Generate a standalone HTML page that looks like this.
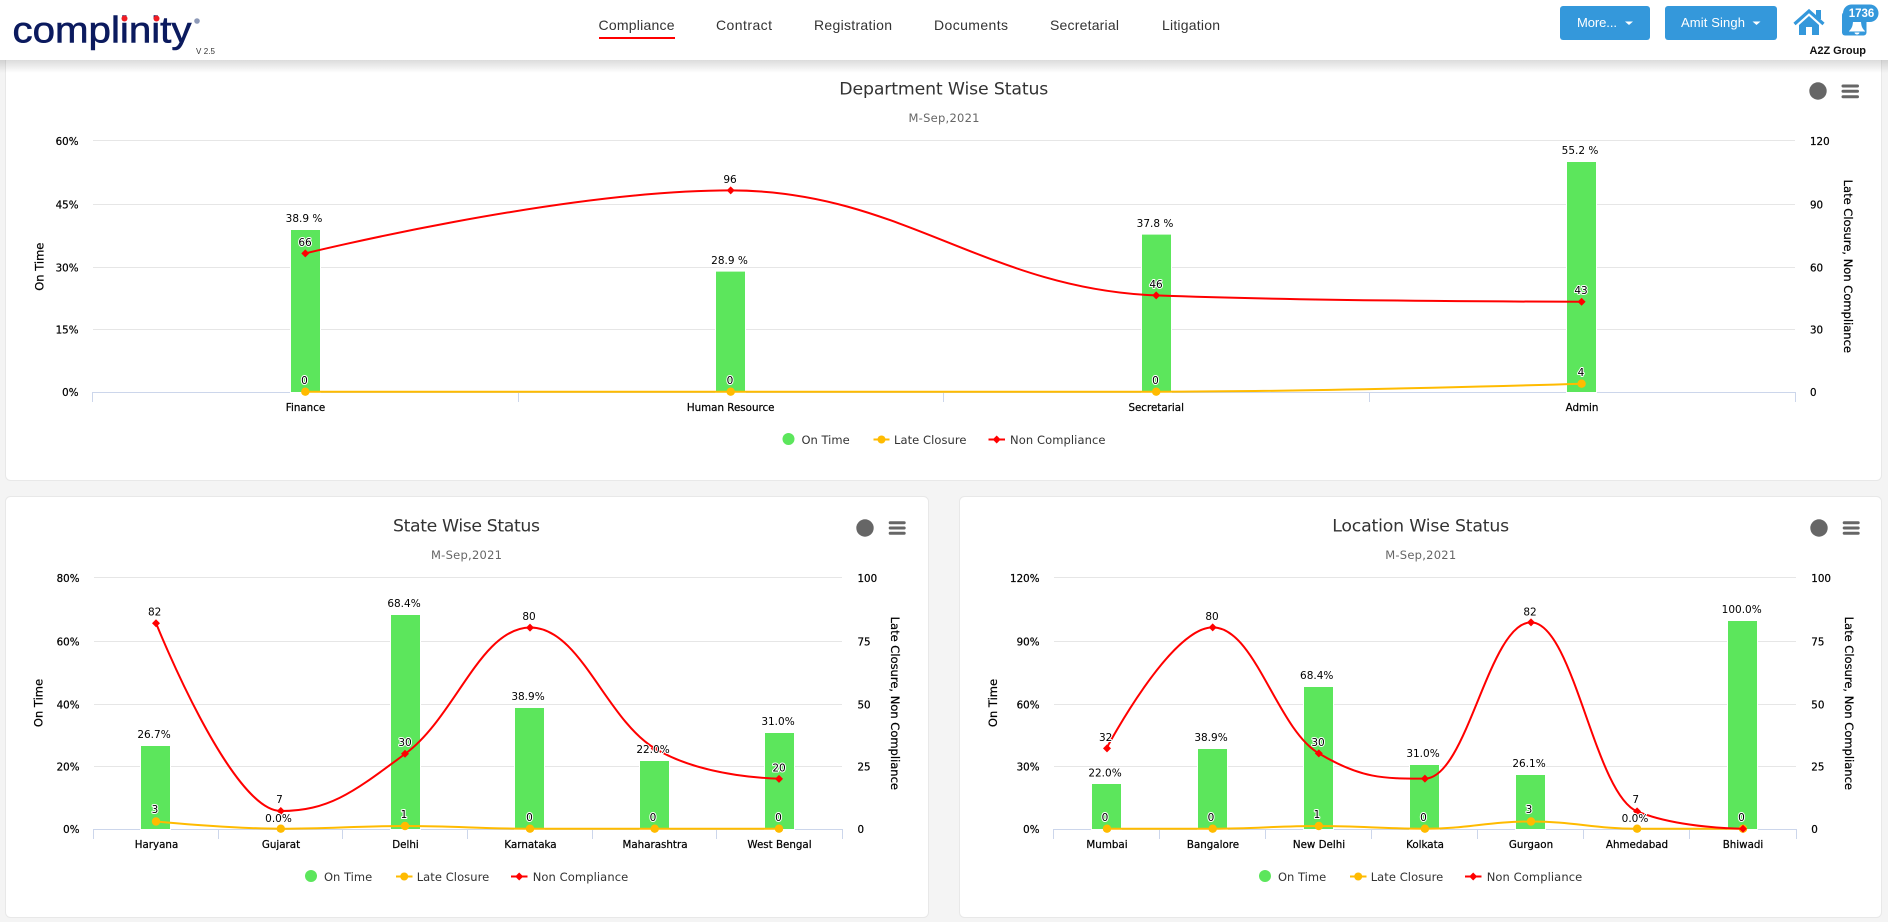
<!DOCTYPE html>
<html><head><meta charset="utf-8"><title>Complinity</title>
<style>
html,body{margin:0;padding:0;background:#f4f4f4;width:1888px;height:922px;overflow:hidden}
svg{display:block;position:absolute;left:0;top:0}
text{font-family:"DejaVu Sans","Liberation Sans",sans-serif}
.g{stroke:#e6e6e6;stroke-width:1;fill:none;shape-rendering:crispEdges}
.a{stroke:#ccd6eb;stroke-width:1;fill:none;shape-rendering:crispEdges}
.b{fill:#5ce65c;stroke:#fff;stroke-width:2;paint-order:stroke}
.r{fill:none;stroke:#ff0000;stroke-width:2}
.y{fill:none;stroke:#ffbb00;stroke-width:2}
.ym{fill:#ffbb00}
.rm{fill:#ff0000}
.t{font-size:10.3px;fill:#000;stroke:#000;stroke-width:.22px}
.tr{font-size:10.3px;fill:#000;text-anchor:end;stroke:#000;stroke-width:.22px}
.c{font-size:10.3px;fill:#000;text-anchor:middle;stroke:#000;stroke-width:.22px}
.at{font-size:11.5px;fill:#000;text-anchor:middle;stroke:#000;stroke-width:.22px}
.d{font-size:10.5px;fill:#000;text-anchor:middle;stroke:#fff;stroke-width:2px;stroke-linejoin:round;paint-order:stroke}
.ttl{font-size:17.3px;fill:#333;text-anchor:middle}
.sub{font-size:11.5px;fill:#666;text-anchor:middle}
.l{font-size:11.5px;fill:#333}
.nav{font-family:"Liberation Sans",sans-serif;font-size:14px;fill:#333}
.btn{font-family:"Liberation Sans",sans-serif;font-size:13px;fill:#fff}
.hb{stroke:#666;stroke-width:3;stroke-linecap:round;fill:none}
</style></head><body>
<svg width="1888" height="922" viewBox="0 0 1888 922" xmlns="http://www.w3.org/2000/svg">
<defs><linearGradient id="sh" x1="0" y1="0" x2="0" y2="1"><stop offset="0" stop-color="#000" stop-opacity=".14"/><stop offset="1" stop-color="#000" stop-opacity="0"/></linearGradient></defs>
<!-- cards -->
<rect x="5.5" y="30.5" width="1876" height="450" rx="5" fill="#fff" stroke="#e8e8e8"/>
<rect x="5.5" y="496.5" width="923" height="421" rx="5" fill="#fff" stroke="#e8e8e8"/>
<rect x="959.5" y="496.5" width="922" height="421" rx="5" fill="#fff" stroke="#e8e8e8"/>

<!-- CHART 1 -->
<g>
<path class="g" d="M93 140.5H1795M93 204.5H1795M93 267.5H1795M93 329.5H1795"/>
<path class="a" d="M92.5 392.5H1795.5M92.5 392V402M518.5 392V402M943.5 392V402M1369.5 392V402M1795.5 392V402"/>
<rect class="b" x="291" y="230" width="29" height="162"/>
<rect class="b" x="716" y="271.6" width="29" height="120.4"/>
<rect class="b" x="1142" y="234.6" width="29" height="157.4"/>
<rect class="b" x="1567" y="162" width="29" height="230"/>
<path class="y" d="M305.3 391.7L1156.2 391.7C1326.4 391.7 1581.6 383.7 1581.6 383.7"/>
<circle class="ym" cx="305.3" cy="391.7" r="4.2"/><circle class="ym" cx="730.7" cy="391.7" r="4.2"/><circle class="ym" cx="1156.2" cy="391.7" r="4.2"/><circle class="ym" cx="1581.6" cy="383.7" r="4.2"/>
<path class="r" d="M305.3 253.4C305.3 253.4 560.5 190.4 730.7 190.4C900.9 190.4 986 289.1 1156.2 295.4C1326.4 301.7 1581.6 301.7 1581.6 301.7"/>
<path class="rm" d="M305.3 249.4l4 4-4 4-4-4zM730.7 186.4l4 4-4 4-4-4zM1156.2 291.4l4 4-4 4-4-4zM1581.6 297.7l4 4-4 4-4-4z"/>
<text class="tr" x="78.5" y="145">60%</text><text class="tr" x="78.5" y="208.5">45%</text><text class="tr" x="78.5" y="271.5">30%</text><text class="tr" x="78.5" y="333.5">15%</text><text class="tr" x="78.5" y="396">0%</text>
<text class="t" x="1810" y="145">120</text><text class="t" x="1810" y="208.5">90</text><text class="t" x="1810" y="271.5">60</text><text class="t" x="1810" y="333.5">30</text><text class="t" x="1810" y="396">0</text>
<text class="at" transform="translate(43.5 266.7) rotate(-90)">On Time</text>
<text class="at" transform="translate(1844 266.3) rotate(90)">Late Closure, Non Compliance</text>
<text class="c" x="305.5" y="411">Finance</text><text class="c" x="730.7" y="411">Human Resource</text><text class="c" x="1156.2" y="411">Secretarial</text><text class="c" x="1582" y="411">Admin</text>
<text class="d" x="304" y="222">38.9 %</text><text class="d" x="729.5" y="264">28.9 %</text><text class="d" x="1155" y="227">37.8 %</text><text class="d" x="1580" y="154">55.2 %</text>
<text class="d" x="305" y="246">66</text><text class="d" x="730" y="183">96</text><text class="d" x="1156" y="288">46</text><text class="d" x="1581" y="294">43</text>
<text class="d" x="304.5" y="384">0</text><text class="d" x="730" y="384">0</text><text class="d" x="1155.5" y="384">0</text><text class="d" x="1581" y="376">4</text>
<text class="ttl" x="943.8" y="94.7" textLength="209">Department Wise Status</text>
<text class="sub" x="944" y="122" textLength="71">M-Sep,2021</text>
<circle cx="788.5" cy="439" r="6" fill="#5ce65c"/><text class="l" x="801.5" y="444">On Time</text>
<path class="y" d="M873.5 439.5H889.5"/><circle class="ym" cx="881.5" cy="439.5" r="4"/><text class="l" x="894" y="444" textLength="72.5">Late Closure</text>
<path class="r" d="M988.5 439.5H1005"/><path class="rm" d="M996.7 435.5l4 4-4 4-4-4z"/><text class="l" x="1010" y="444" textLength="95.5">Non Compliance</text>
<circle cx="1818" cy="91" r="8.7" fill="#666"/><path class="hb" d="M1843 86H1857.500M1843 91.300H1857.500M1843 96.700H1857.500"/>
</g>

<!-- CHART 2 -->
<g>
<path class="g" d="M94 577.5H842M94 641.5H842M94 704.5H842M94 766.5H842"/>
<path class="a" d="M93.5 829.5H842.5M93.5 829V839M218.5 829V839M342.5 829V839M467.5 829V839M592.5 829V839M716.5 829V839M842.5 829V839"/>
<rect class="b" x="141" y="746" width="29" height="83"/>
<rect class="b" x="391" y="615" width="29" height="214"/>
<rect class="b" x="515" y="708" width="29" height="121"/>
<rect class="b" x="640" y="761" width="29" height="68"/>
<rect class="b" x="765" y="733" width="29" height="96"/>
<path class="y" d="M156 821.5C156 821.5 230.9 828.700 280.8 828.700C330.700 828.700 355.700 826 405.6 826C455.500 826 480.500 828.700 530.4 828.700L779.6 828.700"/>
<circle class="ym" cx="156" cy="821.5" r="4.2"/><circle class="ym" cx="280.8" cy="828.7" r="4.2"/><circle class="ym" cx="405" cy="826" r="4.2"/><circle class="ym" cx="530" cy="828.7" r="4.2"/><circle class="ym" cx="654.7" cy="828.7" r="4.2"/><circle class="ym" cx="779" cy="828.7" r="4.2"/>
<path class="r" d="M156 623C156 623 230.900 811 280.800 811C330.700 811 355.700 790.200 405.600 753.500C455.500 716.800 480.500 627.500 530.400 627.500C580.300 627.500 605.100 718.400 655 748.500C704.900 778.600 779.600 778.600 779.600 778.600"/>
<path class="rm" d="M156 619.3l4 4-4 4-4-4zM280.8 807l4 4-4 4-4-4zM405 749.7l4 4-4 4-4-4zM530 623.6l4 4-4 4-4-4zM654.7 744.5l4 4-4 4-4-4zM779 774.9l4 4-4 4-4-4z"/>
<text class="tr" x="79.5" y="582">80%</text><text class="tr" x="79.5" y="645.5">60%</text><text class="tr" x="79.5" y="708.5">40%</text><text class="tr" x="79.5" y="770.5">20%</text><text class="tr" x="79.5" y="833">0%</text>
<text class="t" x="857.5" y="582">100</text><text class="t" x="857.5" y="645.5">75</text><text class="t" x="857.5" y="708.5">50</text><text class="t" x="857.5" y="770.5">25</text><text class="t" x="857.5" y="833">0</text>
<text class="at" transform="translate(42.5 703) rotate(-90)">On Time</text>
<text class="at" transform="translate(891 703.3) rotate(90)">Late Closure, Non Compliance</text>
<text class="c" x="156.5" y="848">Haryana</text><text class="c" x="281" y="848">Gujarat</text><text class="c" x="405.5" y="848">Delhi</text><text class="c" x="530.5" y="848">Karnataka</text><text class="c" x="655" y="848">Maharashtra</text><text class="c" x="779.5" y="848">West Bengal</text>
<text class="d" x="154.7" y="615.5">82</text><text class="d" x="154" y="738">26.7%</text><text class="d" x="155" y="813">3</text>
<text class="d" x="279.5" y="803">7</text><text class="d" x="278.5" y="822">0.0%</text>
<text class="d" x="404" y="607">68.4%</text><text class="d" x="405" y="746">30</text><text class="d" x="404" y="818">1</text>
<text class="d" x="529" y="620">80</text><text class="d" x="528" y="700">38.9%</text><text class="d" x="529.5" y="821">0</text>
<text class="d" x="653" y="753">22.0%</text><text class="d" x="653" y="821">0</text>
<text class="d" x="778" y="725">31.0%</text><text class="d" x="779" y="771.7">20</text><text class="d" x="778.5" y="821">0</text>
<text class="ttl" x="466.5" y="531.7" textLength="147">State Wise Status</text>
<text class="sub" x="466.5" y="559" textLength="71">M-Sep,2021</text>
<circle cx="311" cy="876" r="6" fill="#5ce65c"/><text class="l" x="324" y="881">On Time</text>
<path class="y" d="M396 876.5H412.5"/><circle class="ym" cx="404.2" cy="876.5" r="4"/><text class="l" x="416.7" y="881" textLength="72.5">Late Closure</text>
<path class="r" d="M511 876.5H527.5"/><path class="rm" d="M519.2 872.5l4 4-4 4-4-4z"/><text class="l" x="532.7" y="881" textLength="95.5">Non Compliance</text>
<circle cx="865" cy="528" r="8.7" fill="#666"/><path class="hb" d="M890.200 522.700H904.200M890.200 528H904.200M890.200 533.300H904.200"/>
</g>

<!-- CHART 3 -->
<g>
<path class="g" d="M1054 577.5H1796M1054 641.5H1796M1054 704.5H1796M1054 766.5H1796"/>
<path class="a" d="M1053.5 829.5H1796.5M1053.5 829V839M1159.5 829V839M1265.5 829V839M1371.5 829V839M1477.5 829V839M1583.5 829V839M1689.5 829V839M1796.5 829V839"/>
<rect class="b" x="1092" y="784" width="29" height="45"/>
<rect class="b" x="1198" y="749" width="29" height="80"/>
<rect class="b" x="1304" y="687" width="29" height="142"/>
<rect class="b" x="1410" y="765" width="29" height="64"/>
<rect class="b" x="1516" y="775" width="29" height="54"/>
<rect class="b" x="1728" y="621" width="29" height="208"/>
<path class="y" d="M1106.5 828.700L1212.700 828.700C1255.100 828.700 1276.400 826 1318.800 826C1361.200 826 1382.500 828.700 1424.900 828.700C1467.300 828.700 1488.600 821.500 1531 821.500C1573.400 821.500 1594.700 828.700 1637.100 828.700L1743.200 828.700"/>
<circle class="ym" cx="1107" cy="828.7" r="4.2"/><circle class="ym" cx="1212.7" cy="828.7" r="4.2"/><circle class="ym" cx="1318.8" cy="826" r="4.2"/><circle class="ym" cx="1424.9" cy="828.7" r="4.2"/><circle class="ym" cx="1531" cy="821.5" r="4.2"/><circle class="ym" cx="1637.1" cy="828.7" r="4.2"/><circle class="ym" cx="1743" cy="828.7" r="4.2"/>
<path class="r" d="M1106.500 748.400C1106.500 748.400 1170.300 627.400 1212.700 627.400C1255.100 627.400 1276.400 728.200 1318.800 753.400C1361.200 778.600 1382.500 778.600 1424.900 778.600C1467.300 778.600 1488.600 622.400 1531 622.400C1573.400 622.400 1594.700 794.100 1637.100 811.400C1679.500 828.700 1743.200 828.700 1743.200 828.700"/>
<path class="rm" d="M1107 744.4l4 4-4 4-4-4zM1212.7 623.4l4 4-4 4-4-4zM1318.8 749.4l4 4-4 4-4-4zM1424.9 774.6l4 4-4 4-4-4zM1531 618.4l4 4-4 4-4-4zM1637.1 807.4l4 4-4 4-4-4zM1743 824.7l4 4-4 4-4-4z"/>
<text class="tr" x="1039.5" y="582">120%</text><text class="tr" x="1039.5" y="645.5">90%</text><text class="tr" x="1039.5" y="708.5">60%</text><text class="tr" x="1039.5" y="770.5">30%</text><text class="tr" x="1039.5" y="833">0%</text>
<text class="t" x="1811.3" y="582">100</text><text class="t" x="1811.3" y="645.5">75</text><text class="t" x="1811.3" y="708.5">50</text><text class="t" x="1811.3" y="770.5">25</text><text class="t" x="1811.3" y="833">0</text>
<text class="at" transform="translate(997 703) rotate(-90)">On Time</text>
<text class="at" transform="translate(1845 703.3) rotate(90)">Late Closure, Non Compliance</text>
<text class="c" x="1107" y="848">Mumbai</text><text class="c" x="1213" y="848">Bangalore</text><text class="c" x="1319" y="848">New Delhi</text><text class="c" x="1425" y="848">Kolkata</text><text class="c" x="1531" y="848">Gurgaon</text><text class="c" x="1637" y="848">Ahmedabad</text><text class="c" x="1743" y="848">Bhiwadi</text>
<text class="d" x="1105.7" y="741">32</text><text class="d" x="1105" y="776.7">22.0%</text><text class="d" x="1105" y="821">0</text>
<text class="d" x="1212" y="620">80</text><text class="d" x="1211" y="741">38.9%</text><text class="d" x="1211" y="821">0</text>
<text class="d" x="1316.7" y="679">68.4%</text><text class="d" x="1318" y="746">30</text><text class="d" x="1317" y="818">1</text>
<text class="d" x="1423" y="757">31.0%</text><text class="d" x="1423.5" y="821">0</text>
<text class="d" x="1530" y="615.5">82</text><text class="d" x="1529" y="767">26.1%</text><text class="d" x="1529" y="813">3</text>
<text class="d" x="1635.7" y="803">7</text><text class="d" x="1635" y="822">0.0%</text>
<text class="d" x="1741.7" y="613">100.0%</text><text class="d" x="1741.5" y="821">0</text>
<text class="ttl" x="1420.7" y="531.7" textLength="177">Location Wise Status</text>
<text class="sub" x="1420.7" y="559" textLength="71">M-Sep,2021</text>
<circle cx="1265" cy="876" r="6" fill="#5ce65c"/><text class="l" x="1278" y="881">On Time</text>
<path class="y" d="M1350 876.5H1366.5"/><circle class="ym" cx="1358.2" cy="876.5" r="4"/><text class="l" x="1370.7" y="881" textLength="72.5">Late Closure</text>
<path class="r" d="M1465 876.5H1481.5"/><path class="rm" d="M1473.2 872.5l4 4-4 4-4-4z"/><text class="l" x="1486.7" y="881" textLength="95.5">Non Compliance</text>
<circle cx="1819" cy="528" r="8.7" fill="#666"/><path class="hb" d="M1844.200 522.700H1858.200M1844.200 528H1858.200M1844.200 533.300H1858.200"/>
</g>

<!-- HEADER -->
<rect x="0" y="60" width="1888" height="13" fill="url(#sh)"/>
<rect x="0" y="0" width="1888" height="60" fill="#fff"/>
<text x="12.5" y="42.5" textLength="179" lengthAdjust="spacingAndGlyphs" style="font-family:'Liberation Sans',sans-serif;font-size:37px;fill:#0b1a5e;stroke:#0b1a5e;stroke-width:.6">complinity</text>
<circle cx="124.500" cy="18.500" r="3" fill="#f01c24"/><circle cx="156.500" cy="18.500" r="3" fill="#f01c24"/>
<circle cx="197" cy="21" r="2.800" fill="#8e9ab8"/>
<text x="196" y="54" textLength="19" style="font-family:'Liberation Sans',sans-serif;font-size:8px;fill:#333">V 2.5</text>

<text class="nav" x="598.5" y="30" textLength="76">Compliance</text>
<rect x="599" y="37" width="76" height="2" fill="#f00"/>
<text class="nav" x="716" y="30" textLength="56">Contract</text>
<text class="nav" x="814" y="30" textLength="78">Registration</text>
<text class="nav" x="934" y="30" textLength="74">Documents</text>
<text class="nav" x="1050" y="30" textLength="69">Secretarial</text>
<text class="nav" x="1162" y="30" textLength="58">Litigation</text>

<rect x="1560" y="6" width="90" height="34" rx="3" fill="#3498db"/>
<text class="btn" x="1577" y="27" textLength="40">More...</text>
<path d="M1625 21.5h8l-4 3.500z" fill="#fff"/>
<rect x="1665" y="6" width="112" height="34" rx="3" fill="#3498db"/>
<text class="btn" x="1681" y="27" textLength="64">Amit Singh</text>
<path d="M1752.500 21.500h8l-4 3.500z" fill="#fff"/>

<!-- home -->
<path d="M1794.500 24L1809 11L1823.500 24" fill="none" stroke="#3498db" stroke-width="3.200"/>
<rect x="1816" y="10" width="5" height="9" fill="#3498db"/>
<path d="M1799 25L1809 16L1819 25V35H1812V27H1806V35H1799Z" fill="#3498db"/>
<!-- bell -->
<rect x="1842" y="12" width="24.500" height="23.500" rx="3" fill="#3498db"/>
<path d="M1853 20h8c0 4 .5 7 2.500 9.500 .5 .7 1 1.200 1.500 1.500v.5h-16v-.5c.5-.3 1-.8 1.500-1.500 2-2.500 2.500-5.500 2.500-9.500z" fill="#fff"/>
<path d="M1854.500 32.500h5a2.500 2 0 0 1-5 0z" fill="#fff"/>
<rect x="1843" y="4.500" width="35.500" height="17.500" rx="8.700" fill="#3498db"/>
<text x="1861.500" y="17" text-anchor="middle" style="font-family:'Liberation Sans',sans-serif;font-size:11.500px;font-weight:bold;fill:#fff">1736</text>
<text x="1809.500" y="54" textLength="56.500" style="font-family:'Liberation Sans',sans-serif;font-size:11px;font-weight:bold;fill:#111">A2Z Group</text>
</svg>
</body></html>
